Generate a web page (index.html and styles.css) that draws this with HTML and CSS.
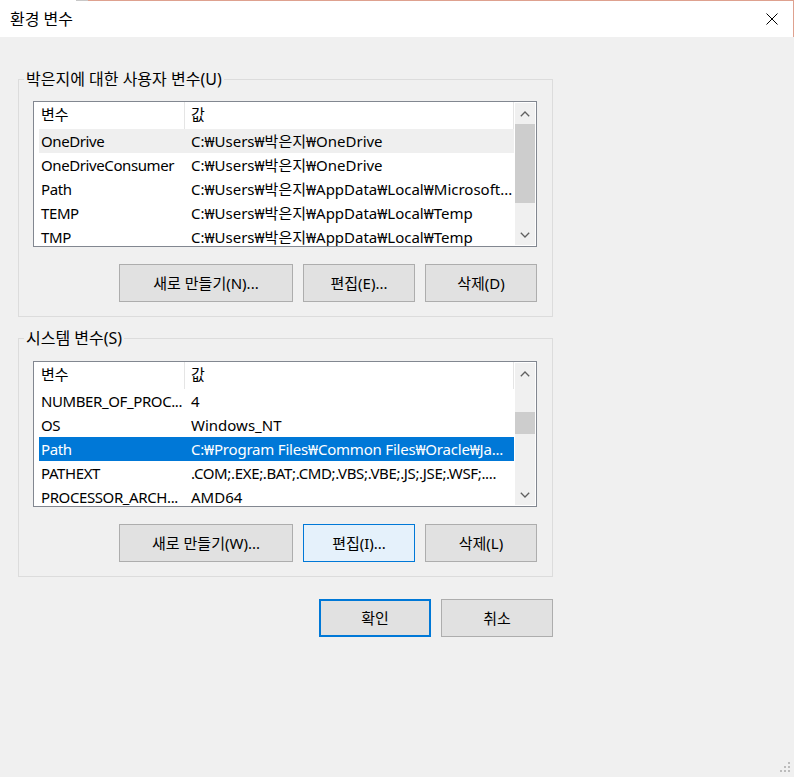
FILE: index.html
```html
<!DOCTYPE html>
<html lang="ko">
<head>
<meta charset="utf-8">
<title>환경 변수</title>
<link rel="stylesheet" href="styles.css">
</head>
<body>
<div class="window">
  <div class="titlebar">
    <span class="title">환경 변수</span>
    <svg class="close" width="12" height="12" viewBox="0 0 12 12"><path d="M0.5 0.5 L11.5 11.5 M11.5 0.5 L0.5 11.5" stroke="#000" stroke-width="1" fill="none"/></svg>
  </div>
  <div class="content">
    <fieldset class="group">
      <legend>박은지에 대한 사용자 변수(U)</legend>
      <div class="listview">
        <div class="lv-main">
          <div class="lv-header"><div class="hcol1">변수</div><div class="hcol2">값</div></div>
          <div class="lv-row hover"><div class="col1">OneDrive</div><div class="col2">C:₩Users₩박은지₩OneDrive</div></div>
          <div class="lv-row"><div class="col1">OneDriveConsumer</div><div class="col2">C:₩Users₩박은지₩OneDrive</div></div>
          <div class="lv-row"><div class="col1">Path</div><div class="col2">C:₩Users₩박은지₩AppData₩Local₩Microsoft...</div></div>
          <div class="lv-row"><div class="col1">TEMP</div><div class="col2">C:₩Users₩박은지₩AppData₩Local₩Temp</div></div>
          <div class="lv-row"><div class="col1">TMP</div><div class="col2">C:₩Users₩박은지₩AppData₩Local₩Temp</div></div>
        </div>
        <div class="scrollbar">
          <div class="sb-btn"><svg width="10" height="6" viewBox="0 0 10 6"><polyline points="0.8,5.2 5,1 9.2,5.2" fill="none" stroke="#606060" stroke-width="1.3"/></svg></div>
          <div class="sb-track"><div class="sb-thumb thumb-user"></div></div>
          <div class="sb-btn"><svg width="10" height="6" viewBox="0 0 10 6"><polyline points="0.8,0.8 5,5 9.2,0.8" fill="none" stroke="#606060" stroke-width="1.3"/></svg></div>
        </div>
      </div>
      <div class="btn-row">
        <button class="btn wide">새로 만들기(N)...</button>
        <button class="btn">편집(E)...</button>
        <button class="btn">삭제(D)</button>
      </div>
    </fieldset>

    <fieldset class="group second">
      <legend>시스템 변수(S)</legend>
      <div class="listview">
        <div class="lv-main">
          <div class="lv-header"><div class="hcol1">변수</div><div class="hcol2">값</div></div>
          <div class="lv-row"><div class="col1">NUMBER_OF_PROC...</div><div class="col2">4</div></div>
          <div class="lv-row"><div class="col1">OS</div><div class="col2">Windows_NT</div></div>
          <div class="lv-row selected"><div class="col1">Path</div><div class="col2 tight-s">C:₩Program Files₩Common Files₩Oracle₩Ja...</div></div>
          <div class="lv-row"><div class="col1">PATHEXT</div><div class="col2 tight">.COM;.EXE;.BAT;.CMD;.VBS;.VBE;.JS;.JSE;.WSF;....</div></div>
          <div class="lv-row"><div class="col1">PROCESSOR_ARCH...</div><div class="col2">AMD64</div></div>
        </div>
        <div class="scrollbar">
          <div class="sb-btn"><svg width="10" height="6" viewBox="0 0 10 6"><polyline points="0.8,5.2 5,1 9.2,5.2" fill="none" stroke="#606060" stroke-width="1.3"/></svg></div>
          <div class="sb-track"><div class="sb-thumb thumb-system"></div></div>
          <div class="sb-btn"><svg width="10" height="6" viewBox="0 0 10 6"><polyline points="0.8,0.8 5,5 9.2,0.8" fill="none" stroke="#606060" stroke-width="1.3"/></svg></div>
        </div>
      </div>
      <div class="btn-row">
        <button class="btn wide">새로 만들기(W)...</button>
        <button class="btn focused">편집(I)...</button>
        <button class="btn">삭제(L)</button>
      </div>
    </fieldset>

    <div class="dialog-buttons">
      <button class="btn default">확인</button>
      <button class="btn">취소</button>
    </div>
  </div>
  <svg class="grip" width="12" height="12" viewBox="0 0 12 12">
    <rect x="8" y="0" width="2" height="2" fill="#bcbcbc"/>
    <rect x="4" y="4" width="2" height="2" fill="#bcbcbc"/>
    <rect x="8" y="4" width="2" height="2" fill="#bcbcbc"/>
    <rect x="0" y="8" width="2" height="2" fill="#bcbcbc"/>
    <rect x="4" y="8" width="2" height="2" fill="#bcbcbc"/>
    <rect x="8" y="8" width="2" height="2" fill="#bcbcbc"/>
  </svg>
</div>
</body>
</html>
```

FILE: styles.css
```css
* { box-sizing: border-box; }

html, body {
  margin: 0;
  padding: 0;
}

body {
  font-family: "Noto Sans", "Noto Sans CJK KR", sans-serif;
  font-size: 15px;
  color: #000;
  background: #f0f0f0;
}

.window {
  position: relative;
  width: 794px;
  height: 777px;
  background: #f0f0f0;
  overflow: hidden;
}

.titlebar {
  height: 37px;
  background: #fff;
  display: flex;
  align-items: center;
  justify-content: space-between;
  padding-left: 10px;
  border-style: solid;
  border-width: 1px 1px 0 0;
  border-image: linear-gradient(to right, #ffffff 77px, #c8c8c8 77px, #c8c8c8 89px, #dea18f 89px) 1;
}

.title {
  font-size: 16px;
  line-height: 20px;
}

.close {
  margin-right: 15px;
  display: block;
}

.content {
  padding: 32px 0 0 18px;
}

.group {
  margin: 0;
  width: 535px;
  border: 1px solid #dcdcdc;
  padding: 0 15px 14px 5px;
  min-width: 0;
}

.group.second {
  margin-top: 11px;
}

.group legend {
  padding: 0 2px;
  font-size: 16px;
  line-height: 20px;
}

.listview {
  margin: 12px 0 0 9px;
  width: 504px;
  height: 146px;
  border: 1px solid #828790;
  background: #fff;
  display: flex;
}

.second .listview {
  margin-top: 13px;
}

.lv-main {
  width: 480px;
  overflow: hidden;
}

.lv-header {
  height: 27px;
  display: flex;
  align-items: stretch;
  line-height: 25px;
}

.hcol1 {
  width: 151px;
  padding-left: 7px;
  border-right: 1px solid #e5e5e5;
}

.hcol2 {
  flex: 1;
  padding-left: 6px;
  border-right: 1px solid #e5e5e5;
}

.lv-row {
  height: 24px;
  margin-left: 5px;
  display: flex;
  line-height: 24px;
  white-space: nowrap;
}

.lv-row.hover {
  background: #efefef;
}

.lv-row.selected {
  background: #0078d7;
  color: #fff;
}

.col1 {
  width: 145px;
  padding-left: 2px;
  overflow: hidden;
  letter-spacing: -0.4px;
}

.col2 {
  flex: 1;
  padding-left: 7px;
  overflow: hidden;
}

.col2.tight {
  letter-spacing: -0.35px;
}

.col2.tight-s {
  letter-spacing: -0.2px;
}

.scrollbar {
  width: 20px;
  margin: 1px 1px 0 1px;
  height: 142px;
  background: #f0f0f0;
  display: flex;
  flex-direction: column;
}

.sb-btn {
  height: 21px;
  display: flex;
  align-items: center;
  justify-content: center;
}

.sb-btn svg {
  display: block;
}

.sb-track {
  flex: 1;
  display: flex;
  flex-direction: column;
}

.sb-thumb {
  background: #cdcdcd;
}

.thumb-user {
  height: 79px;
}

.thumb-system {
  margin-top: 28px;
  height: 22px;
}

.btn-row {
  margin: 17px 0 0 9px;
  width: 504px;
  display: flex;
  justify-content: flex-end;
  gap: 10px;
}

.btn {
  font-family: inherit;
  font-size: 15px;
  color: #000;
  width: 112px;
  height: 38px;
  padding: 0;
  margin: 0;
  background: #e1e1e1;
  border: 1px solid #adadad;
  border-radius: 0;
  line-height: 20px;
}

.btn.wide {
  width: 174px;
}

.btn.focused {
  background: #e5f1fb;
  border-color: #0078d7;
}

.btn.default {
  border: 2px solid #0078d7;
}

.dialog-buttons {
  margin-top: 22px;
  width: 535px;
  display: flex;
  justify-content: flex-end;
  gap: 10px;
}

.grip {
  position: absolute;
  right: 2px;
  bottom: 3px;
}
```
